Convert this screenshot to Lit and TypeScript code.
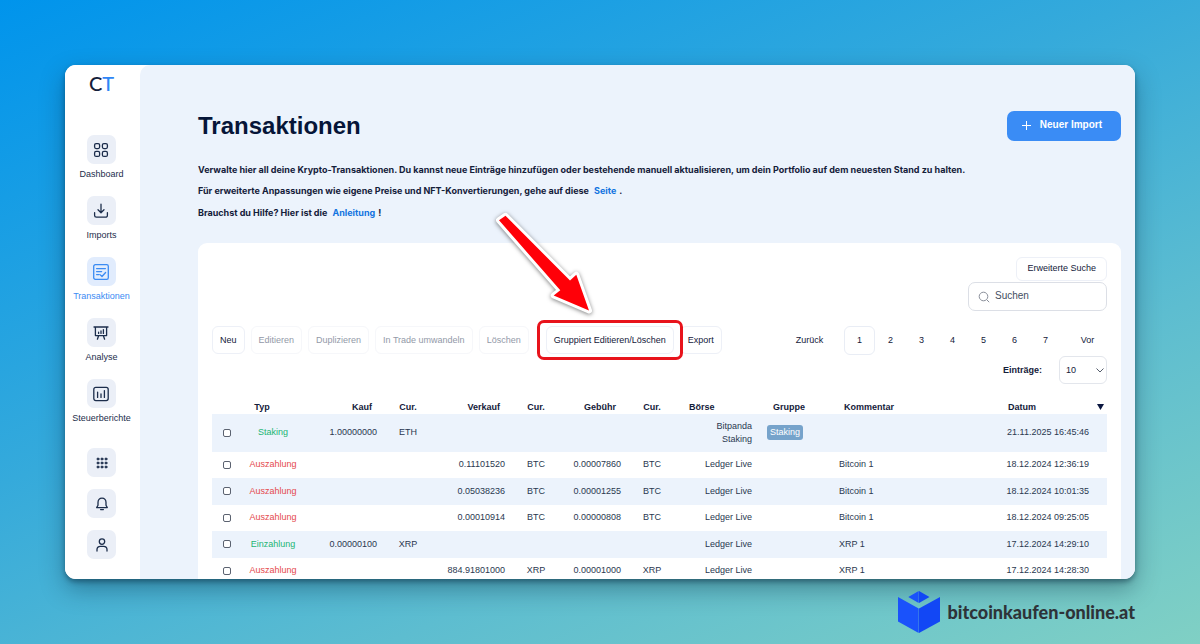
import { LitElement, html, css, svg, nothing } from "lit";
import { customElement } from "lit/decorators.js";
import { classMap } from "lit/directives/class-map.js";

interface Transaction {
  type: string;
  incoming: boolean;
  buy?: string;
  buyCur?: string;
  sell?: string;
  sellCur?: string;
  fee?: string;
  feeCur?: string;
  exchange: string;
  group?: string;
  comment?: string;
  date: string;
}

const transactions: Transaction[] = [
  { type: "Staking", incoming: true, buy: "1.00000000", buyCur: "ETH", exchange: "Bitpanda Staking", group: "Staking", date: "21.11.2025 16:45:46" },
  { type: "Auszahlung", incoming: false, sell: "0.11101520", sellCur: "BTC", fee: "0.00007860", feeCur: "BTC", exchange: "Ledger Live", comment: "Bitcoin 1", date: "18.12.2024 12:36:19" },
  { type: "Auszahlung", incoming: false, sell: "0.05038236", sellCur: "BTC", fee: "0.00001255", feeCur: "BTC", exchange: "Ledger Live", comment: "Bitcoin 1", date: "18.12.2024 10:01:35" },
  { type: "Auszahlung", incoming: false, sell: "0.00010914", sellCur: "BTC", fee: "0.00000808", feeCur: "BTC", exchange: "Ledger Live", comment: "Bitcoin 1", date: "18.12.2024 09:25:05" },
  { type: "Einzahlung", incoming: true, buy: "0.00000100", buyCur: "XRP", exchange: "Ledger Live", comment: "XRP 1", date: "17.12.2024 14:29:10" },
  { type: "Auszahlung", incoming: false, sell: "884.91801000", sellCur: "XRP", fee: "0.00001000", feeCur: "XRP", exchange: "Ledger Live", comment: "XRP 1", date: "17.12.2024 14:28:30" },
];

const icons = {
  dashboard: svg`<rect x="1.600" y="1.600" width="5" height="5" rx="1.500"/><rect x="9.400" y="1.600" width="5" height="5" rx="1.500"/><rect x="1.600" y="9.400" width="5" height="5" rx="1.500"/><rect x="9.400" y="9.400" width="5" height="5" rx="1.500"/>`,
  imports: svg`<path d="M8 1.2V9.600M5 6.800 8 9.800 11 6.800M1.600 9.600v2.800a1.800 1.800 0 0 0 1.800 1.800h9.200a1.800 1.800 0 0 0 1.800-1.800V9.600"/>`,
  transactions: svg`<rect x=".7" y=".7" width="14.6" height="14.6" rx="1.6"/><path d="M3.6 4.6h8.8M3.6 7.6h5M3.6 10.6h2.2M7 10.6l2 1.9 3.6-4"/>`,
  analysis: svg`<path d="M1 2h14M2.4 2v8.6h11.2V2M5.6 10.8 4.4 14.2M10.4 10.8l1.2 3.4M5.6 8.4V7.2M8 8.4V6M10.4 8.4V4.6"/>`,
  reports: svg`<rect x=".8" y="1.4" width="14.4" height="13.2" rx="2"/><path d="M4.6 11.4V6.2M8 11.4V8M11.4 11.4V4.6"/>`,
  bell: svg`<path d="M8 2.2c-2.6 0-4 1.9-4 4.2v2.8L2.7 11.6h10.6L12 9.2V6.4c0-2.3-1.4-4.2-4-4.2ZM6.6 13.6h2.8"/>`,
  user: svg`<circle cx="8" cy="4.6" r="2.7"/><path d="M3 14v-1.4c0-2 1.6-3.2 3.4-3.2h3.2c1.8 0 3.4 1.2 3.4 3.2V14"/>`,
  apps: svg`${[4, 8, 12].map((y) => [4, 8, 12].map((x) => svg`<circle class="dot" cx=${x} cy=${y} r="1.1"/>`))}`,
};

const navItems = [
  { label: "Dashboard", icon: icons.dashboard },
  { label: "Imports", icon: icons.imports },
  { label: "Transaktionen", icon: icons.transactions, active: true },
  { label: "Analyse", icon: icons.analysis },
  { label: "Steuerberichte", icon: icons.reports },
];

const tools = [
  { label: "Apps", icon: icons.apps },
  { label: "Benachrichtigungen", icon: icons.bell },
  { label: "Profil", icon: icons.user },
];

@customElement("ct-sidebar")
class CtSidebar extends LitElement {
  static styles = css`
    :host {
      display: flex;
      flex-direction: column;
      align-items: center;
      background: #fff;
      padding: 7px 2px 0 0;
    }
    .logo {
      font: 500 20px/22px Lato, sans-serif;
      color: #14203a;
      text-decoration: none;
    }
    .logo-t { color: #2f86f6; }
    .nav {
      display: flex;
      flex-direction: column;
      align-items: center;
      gap: 15px;
      margin-top: 41px;
    }
    .item {
      display: flex;
      flex-direction: column;
      align-items: center;
      gap: 4px;
      color: #1c2d4b;
      font-size: 9px;
      line-height: 13px;
      text-decoration: none;
    }
    .active { color: #3b8bf3; }
    .tile {
      display: grid;
      place-items: center;
      width: 29px;
      height: 29px;
      padding: 0;
      border: 0;
      border-radius: 7px;
      background: #ebeff7;
      color: #1c2d4b;
    }
    .item .tile { color: inherit; }
    .active .tile { background: #e1ecfd; }
    .tools {
      display: flex;
      flex-direction: column;
      gap: 12px;
      margin-top: 23px;
    }
    svg {
      width: 16px;
      height: 16px;
      fill: none;
      stroke: currentColor;
      stroke-width: 1.3;
      stroke-linecap: round;
      stroke-linejoin: round;
    }
    .dot {
      fill: currentColor;
      stroke-width: 0.7;
    }
  `;

  render() {
    return html`
      <a class="logo" href="#">C<span class="logo-t">T</span></a>
      <nav class="nav">
        ${navItems.map(
          (n) => html`<a class=${classMap({ item: true, active: !!n.active })} href="#">
            <span class="tile"><svg viewBox="0 0 16 16">${n.icon}</svg></span>${n.label}
          </a>`
        )}
      </nav>
      <div class="tools">
        ${tools.map((t) => html`<button class="tile" aria-label=${t.label}><svg viewBox="0 0 16 16">${t.icon}</svg></button>`)}
      </div>
    `;
  }
}

@customElement("ct-table")
class CtTable extends LitElement {
  static styles = css`
    :host { display: block; }
    table {
      width: 100%;
      table-layout: fixed;
      border-collapse: collapse;
      font-size: 9px;
      line-height: 13px;
      color: #2a3850;
    }
    .w-check { width: 30px; }
    .w-type { width: 62px; }
    .w-amount { width: 80px; }
    .w-cur { width: 48px; }
    .w-fee { width: 68px; }
    .w-exchange { width: 83px; }
    .w-group { width: 52px; }
    .w-date { width: 118px; }
    th, td { padding: 0; text-align: center; }
    th {
      height: 14px;
      color: #14203a;
      font-weight: bold;
    }
    td { height: 26px; padding-bottom: 1px; }
    tbody tr:nth-child(even) td { height: 25px; }
    .tall td { height: 37px; }
    tbody tr:nth-child(odd) { background: #ecf3fc; }
    td.num { text-align: right; padding-right: 7px; }
    th.num { text-align: right; padding-right: 12px; }
    th.type { padding-right: 22px; }
    th.exchange { text-align: left; padding-left: 13px; }
    td.exchange { text-align: right; padding: 0 7px 1px 20px; }
    th.group { padding-left: 8px; }
    th.comment { text-align: left; padding-left: 33px; }
    td.comment { text-align: left; padding-left: 28px; }
    td.date { text-align: right; padding-right: 18px; }
    .sort {
      display: flex;
      justify-content: space-between;
      align-items: center;
      padding: 0 3px 0 19px;
    }
    .sort svg { width: 7px; height: 6px; fill: #0b1740; }
    .in { color: #22b573; }
    .out { color: #e5484d; }
    .check {
      appearance: none;
      display: block;
      box-sizing: border-box;
      width: 8px;
      height: 8px;
      margin: 0 auto;
      border: 1px solid #5b6270;
      border-radius: 2px;
      background: #fff;
    }
    .badge {
      display: inline-block;
      padding: 1px 3px;
      border-radius: 3px;
      background: #76a3cb;
      color: #fff;
    }
  `;

  render() {
    return html`
      <table>
        <colgroup>
          <col class="w-check" /><col class="w-type" /><col class="w-amount" /><col class="w-cur" />
          <col class="w-amount" /><col class="w-cur" /><col class="w-fee" /><col class="w-cur" />
          <col class="w-exchange" /><col class="w-group" /><col /><col class="w-date" />
        </colgroup>
        <thead>
          <tr>
            <th></th>
            <th class="type">Typ</th>
            <th class="num">Kauf</th>
            <th>Cur.</th>
            <th class="num">Verkauf</th>
            <th>Cur.</th>
            <th class="num">Gebühr</th>
            <th>Cur.</th>
            <th class="exchange">Börse</th>
            <th class="group">Gruppe</th>
            <th class="comment">Kommentar</th>
            <th><div class="sort">Datum<svg viewBox="0 0 7 6"><path d="M0 0h7L3.500 6z" /></svg></div></th>
          </tr>
        </thead>
        <tbody>
          ${transactions.map(
            (t) => html`<tr class=${classMap({ tall: !!t.group })}>
              <td><input class="check" type="checkbox" aria-label="Auswählen" /></td>
              <td class=${t.incoming ? "in" : "out"}>${t.type}</td>
              <td class="num">${t.buy}</td>
              <td>${t.buyCur}</td>
              <td class="num">${t.sell}</td>
              <td>${t.sellCur}</td>
              <td class="num">${t.fee}</td>
              <td>${t.feeCur}</td>
              <td class="exchange">${t.exchange}</td>
              <td>${t.group ? html`<span class="badge">${t.group}</span>` : nothing}</td>
              <td class="comment">${t.comment}</td>
              <td class="date">${t.date}</td>
            </tr>`
          )}
        </tbody>
      </table>
    `;
  }
}

@customElement("app-root")
class AppRoot extends LitElement {
  static styles = css`
    :host {
      display: flex;
      flex-direction: column;
      box-sizing: border-box;
      height: 100vh;
      padding: 65px 65px 0;
      background: linear-gradient(157deg, #0094ec 0%, #35aadb 42%, #5dbdd0 70%, #80d0c4 100%);
      font-family: "Liberation Sans", Arial, sans-serif;
      color: #14203a;
    }
    button, input, select { font: inherit; color: inherit; }
    .window {
      display: grid;
      grid-template-columns: 75px 1fr;
      flex: 1;
      min-height: 0;
      overflow: hidden;
      border-radius: 11px;
      background: #fff;
      box-shadow: 0 3px 5px rgba(0, 30, 50, 0.4), 0 10px 24px rgba(0, 30, 50, 0.35);
    }
    .main {
      padding: 46px 14px 0 58px;
      border-top-left-radius: 10px;
      background: #ecf3fc;
      min-width: 0;
    }
    .head {
      display: flex;
      justify-content: space-between;
      align-items: center;
    }
    h1 {
      margin: 0;
      font-size: 24px;
      line-height: 30px;
      color: #061538;
    }
    .primary {
      display: flex;
      align-items: center;
      gap: 9px;
      height: 30px;
      padding: 0 19px 3px 15px;
      border: 0;
      border-radius: 7px;
      background: #3a8cf5;
      color: #fff;
      font-size: 10px;
      font-weight: bold;
    }
    .primary svg {
      width: 9px;
      height: 9px;
      margin-top: 2px;
      stroke: currentColor;
    }
    .intro {
      margin: 18px 0 20px;
      font-family: Inter, "Liberation Sans", sans-serif;
      font-size: 9px;
      font-weight: 700;
      line-height: 21px;
    }
    .intro p { margin: 0; }
    .intro p:last-child { padding-top: 1px; }
    .intro a {
      margin: 0 3px;
      color: #1273e0;
      text-decoration: none;
    }
    .card {
      display: flex;
      flex-direction: column;
      min-height: 100%;
      box-sizing: border-box;
      padding: 14px;
      border-radius: 9px;
      background: #fff;
      font-size: 9px;
    }
    .search {
      display: flex;
      flex-direction: column;
      align-items: flex-end;
      gap: 1px;
    }
    .btn {
      box-sizing: border-box;
      height: 28px;
      padding: 0 7px;
      border: 1px solid #edf0f7;
      border-radius: 6px;
      background: #fff;
      white-space: nowrap;
    }
    .btn:disabled { color: #9299a8; border-color: #f6f7fa; }
    .advanced { height: 24px; padding: 0 10px 2px; }
    .field {
      display: flex;
      align-items: center;
      gap: 5px;
      box-sizing: border-box;
      width: 139px;
      height: 29px;
      padding: 0 9px;
      border: 1px solid #dcdfe6;
      border-radius: 7px;
    }
    .field svg {
      flex: none;
      width: 12px;
      height: 12px;
      fill: none;
      stroke: #8a8f9a;
    }
    .field input {
      min-width: 0;
      padding: 0 0 2px;
      border: 0;
      outline: 0;
      font-size: 10px;
    }
    .field input::placeholder { color: #444e62; opacity: 1; }
    .bar {
      display: flex;
      justify-content: space-between;
      align-items: flex-start;
      margin: 15px 0 16px;
    }
    .actions { display: flex; gap: 6px; }
    .marked {
      position: relative;
      z-index: 1;
      margin-left: 11px;
    }
    .marked::before {
      content: "";
      position: absolute;
      z-index: -1;
      inset: -6px -9px;
      border: 3px solid #e8131b;
      border-radius: 7px;
      background: #fff;
    }
    .arrow {
      position: absolute;
      left: -56px;
      bottom: 34px;
      width: 106px;
      height: 114px;
      overflow: visible;
      filter: drop-shadow(0 1px 2px rgba(0, 0, 0, 0.5));
      pointer-events: none;
    }
    .arrow path {
      fill: #ff0008;
      stroke: #fff;
      stroke-width: 6;
      stroke-linejoin: round;
      paint-order: stroke;
    }
    .paging {
      display: flex;
      flex-direction: column;
      align-items: flex-end;
      gap: 1px;
    }
    .pages { display: flex; align-items: center; }
    .page {
      box-sizing: border-box;
      width: 31px;
      height: 29px;
      padding: 0 0 2px;
      border: 0;
      border-radius: 6px;
      background: none;
    }
    .current { border: 1px solid #e9edf5; }
    .prev, .next { width: 39px; }
    .prev { margin-right: 15px; }
    .next { margin-left: 7px; }
    .entries {
      display: flex;
      align-items: center;
      gap: 17px;
      font-weight: bold;
    }
    .select {
      display: grid;
      align-items: center;
      width: 48px;
      height: 28px;
    }
    .select select {
      grid-area: 1 / 1;
      appearance: none;
      width: 100%;
      height: 100%;
      padding: 0 6px;
      border: 1px solid #e3e6ec;
      border-radius: 6px;
      background: #fff;
      font-weight: normal;
    }
    .select svg {
      grid-area: 1 / 1;
      justify-self: end;
      width: 8px;
      height: 5px;
      margin-right: 3px;
      fill: none;
      stroke: #555d6c;
      pointer-events: none;
    }
    .brand {
      display: flex;
      justify-content: flex-end;
      align-items: center;
      gap: 8px;
      height: 65px;
      color: #2e3338;
      font: 900 18px/22px Lato, sans-serif;
    }
    .brand svg { width: 42px; height: 42px; }
    .face-a { fill: #1a52fb; }
    .face-b { fill: #1247f5; }
  `;

  render() {
    return html`
      <div class="window">
        <ct-sidebar></ct-sidebar>
        <main class="main">
          <div class="head">
            <h1>Transaktionen</h1>
            <button class="primary"><svg viewBox="0 0 9 9"><path d="M4.500 0v9M0 4.500h9" /></svg>Neuer Import</button>
          </div>
          <div class="intro">
            <p>Verwalte hier all deine Krypto-Transaktionen. Du kannst neue Einträge hinzufügen oder bestehende manuell aktualisieren, um dein Portfolio auf dem neuesten Stand zu halten.</p>
            <p>Für erweiterte Anpassungen wie eigene Preise und NFT-Konvertierungen, gehe auf diese <a href="#">Seite</a>.</p>
            <p>Brauchst du Hilfe? Hier ist die <a href="#">Anleitung</a>!</p>
          </div>
          <section class="card">
            <div class="search">
              <button class="btn advanced">Erweiterte Suche</button>
              <label class="field">
                <svg viewBox="0 0 12 12"><circle cx="5.500" cy="5.500" r="4.300" /><path d="m8.700 8.700 2.500 2.500" /></svg>
                <input type="text" placeholder="Suchen" aria-label="Suchen" />
              </label>
            </div>
            <div class="bar">
              <div class="actions">
                <button class="btn">Neu</button>
                <button class="btn" disabled>Editieren</button>
                <button class="btn" disabled>Duplizieren</button>
                <button class="btn" disabled>In Trade umwandeln</button>
                <button class="btn" disabled>Löschen</button>
                <div class="marked">
                  <button class="btn">Gruppiert Editieren/Löschen</button>
                  <svg class="arrow" viewBox="490 206 106 114">
                    <path d="M499 220.300 505.500 215.800 570 280.500 576.300 274.700 589 310.500 553.700 295.500 560.300 290.300Z" />
                  </svg>
                </div>
                <button class="btn">Export</button>
              </div>
              <div class="paging">
                <div class="pages">
                  <button class="page prev">Zurück</button>
                  ${[1, 2, 3, 4, 5, 6, 7].map((n) => html`<button class=${classMap({ page: true, current: n === 1 })}>${n}</button>`)}
                  <button class="page next">Vor</button>
                </div>
                <label class="entries">Einträge:
                  <span class="select">
                    <select><option>10</option><option>25</option><option>50</option></select>
                    <svg viewBox="0 0 8 5"><path d="m.5.500 3.500 3.500L7.500.500" /></svg>
                  </span>
                </label>
              </div>
            </div>
            <ct-table></ct-table>
          </section>
        </main>
      </div>
      <footer class="brand">
        <svg viewBox="0 0 42 42">
          <path class="face-a" d="M0 6 20.700 17.500V42L0 30.500Z" />
          <path class="face-b" d="M42 6 21 17.500V42L42 30.500Z" />
          <path class="face-a" d="M10.300 6 20.700 0V12Z" />
          <path class="face-b" d="M31.500 6 21 0V12Z" />
        </svg>
        bitcoinkaufen-online.at
      </footer>
    `;
  }
}
